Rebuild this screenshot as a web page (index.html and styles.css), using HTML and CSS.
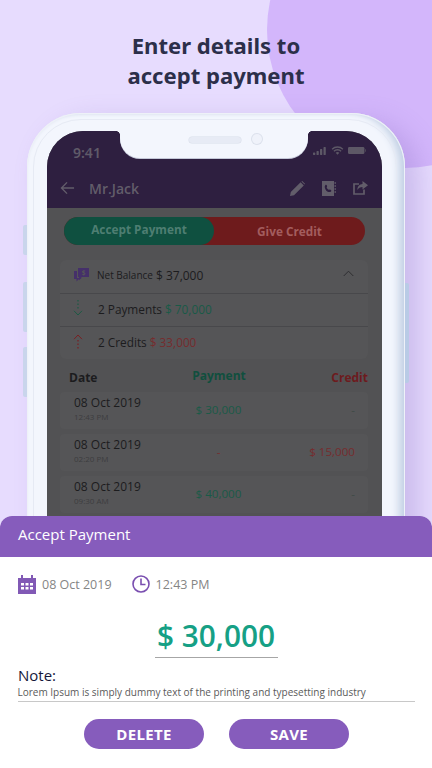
FILE: index.html
```
<!DOCTYPE html>
<html lang="en">
<head>
<meta charset="utf-8">
<title>Accept payment</title>
<link rel="stylesheet" href="styles.css">
</head>
<body>
<div class="page">
  <div class="blob"></div>
  <h1 class="title">Enter details to<br>accept payment</h1>
  <div class="phone">
    <span class="side side-a"></span><span class="side side-b"></span><span class="side side-c"></span><span class="side side-d"></span>
    <div class="screen">
      <div class="notch"><span class="speaker"></span><span class="camera"></span></div>
      <div class="appbar">
        <div class="status">
          <span class="clock">9:41</span>
          <div class="status-icons">
            <svg width="14" height="8" viewBox="0 0 16 10" preserveAspectRatio="none"><g fill="#5d5866"><rect x="0" y="7" width="2.6" height="3" rx=".6"/><rect x="4" y="5" width="2.6" height="5" rx=".6"/><rect x="8" y="2.5" width="2.6" height="7.5" rx=".6"/><rect x="12" y="0" width="2.6" height="10" rx=".6"/></g></svg>
            <svg width="13" height="9" viewBox="0 0 14 10"><path d="M1 3.6a8.6 8.6 0 0 1 12 0M3 5.8a5.7 5.7 0 0 1 8 0" fill="none" stroke="#5d5866" stroke-width="1.5"/><path d="M5 7.6a3 3 0 0 1 4 0L7 9.8z" fill="#5d5866"/></svg>
            <svg width="18" height="7" viewBox="0 0 18 8" preserveAspectRatio="none"><rect width="16.4" height="8" rx="1.4" fill="#5d5866"/><rect x="16.9" y="2.6" width="1.1" height="2.8" fill="#4a4454"/></svg>
          </div>
        </div>
        <div class="nav">
          <svg class="nav-back" width="15" height="14" viewBox="0 0 16 14"><path d="M15 7H2M7.5 1 1.6 7l5.900 6" fill="none" stroke="#625d6a" stroke-width="1.500"/></svg>
          <span class="nav-name">Mr.Jack</span>
          <svg class="nav-icon" width="15" height="15" viewBox="0 0 15 15"><path d="M0 15l.8-4L10.600 1.200l3.200 3.200L4 14.200zM11.400.4l.8-.4 2.800 2.800-.4.8z" fill="#625d6a"/></svg>
          <svg class="nav-icon" width="14" height="15" viewBox="0 0 14 15"><path d="M0 0h12v15H0z" fill="#625d6a"/><path d="M3.400 4c1-.8 1.700.5 1.700 1.300 0 .8-.5.8-.4 1.300.3 1 1 1.800 1.900 2.200.5.100.6-.5 1.300-.4.8.1 1.900 1 1.300 1.800-1.200 1.500-3.500.8-4.900-.5C3 8 2 5.300 3.400 4z" fill="#2e1f40"/><path d="M12.500 2h1.500M12.500 5h1.500M12.500 8h1.500M12.500 11h1.500" stroke="#625d6a" stroke-width="1.300"/></svg>
          <svg class="nav-icon" width="15" height="14" viewBox="0 0 15 14"><path d="M6 3H1v10h10V8.500" fill="none" stroke="#625d6a" stroke-width="1.700"/><path d="M9.500 0 15 4.200 9.500 8.500V6C7 6 5.500 7 4.300 9c.2-3.500 2.200-5.800 5.200-6z" fill="#625d6a"/></svg>
        </div>
      </div>
      <div class="content">
        <div class="toggle">
          <span class="toggle-on">Accept Payment</span>
          <span class="toggle-off">Give Credit</span>
        </div>
        <div class="panel">
          <div class="panel-row panel-head">
            <svg class="panel-icon" width="15" height="14" viewBox="0 0 15 14"><path d="M4 0h11v9H8l-3 2.500V9H4z" fill="#45306a"/><path d="M0 3h3v7h2v2.200L7.500 10H6l-3.500 3.500V11H0z" fill="#45306a"/><text x="9.500" y="7" font-size="6.500" font-family="Open Sans" font-weight="700" text-anchor="middle" fill="#555557">$</text></svg>
            <span class="net-label">Net Balance</span>
            <span class="net-value">$ 37,000</span>
            <svg class="chevron" width="11" height="7" viewBox="0 0 11 7"><path d="M.7 6 5.500 1.200 10.300 6" fill="none" stroke="#2e2e30" stroke-width="1"/></svg>
          </div>
          <div class="panel-row">
            <svg class="panel-icon arrow" width="10" height="17" viewBox="0 0 10 17"><path d="M5 0v10" stroke="#1c5a44" stroke-width="1.200" stroke-dasharray="1.500 2"/><path d="M1 10.800l4 4.200 4-4.200" fill="none" stroke="#1c5a44" stroke-width="1"/></svg>
            <span class="row-text">2 Payments <span class="green">$ 70,000</span></span>
          </div>
          <div class="panel-row">
            <svg class="panel-icon arrow" width="10" height="17" viewBox="0 0 10 17"><path d="M5 7v10" stroke="#7a1f22" stroke-width="1.200" stroke-dasharray="1.500 2"/><path d="M1 6.200l4-4.200 4 4.200" fill="none" stroke="#7a1f22" stroke-width="1"/></svg>
            <span class="row-text">2 Credits <span class="red">$ 33,000</span></span>
          </div>
        </div>
        <div class="thead">
          <span class="th-date">Date</span>
          <span class="th-pay">Payment</span>
          <span class="th-credit">Credit</span>
        </div>
        <div class="tx">
          <div class="tx-date"><div class="tx-day">08 Oct 2019</div><div class="tx-time">12:43 PM</div></div>
          <span class="tx-pay green">$ 30,000</span>
          <span class="tx-credit muted">-</span>
        </div>
        <div class="tx">
          <div class="tx-date"><div class="tx-day">08 Oct 2019</div><div class="tx-time">02:20 PM</div></div>
          <span class="tx-pay red">-</span>
          <span class="tx-credit red">$ 15,000</span>
        </div>
        <div class="tx">
          <div class="tx-date"><div class="tx-day">08 Oct 2019</div><div class="tx-time">09:30 AM</div></div>
          <span class="tx-pay green">$ 40,000</span>
          <span class="tx-credit muted">-</span>
        </div>
      </div>
    </div>
  </div>
  <div class="sheet">
    <div class="sheet-head">Accept Payment</div>
    <div class="sheet-body">
      <div class="when">
        <svg width="18" height="19" viewBox="0 0 18 19"><path d="M0 3h3V0h2v3h8V0h2v3h3v16H0z" fill="#8159b5"/><g fill="#fff"><rect x="3" y="8" width="3" height="2.500"/><rect x="7.500" y="8" width="3" height="2.500"/><rect x="12" y="8" width="3" height="2.500"/><rect x="3" y="12" width="3" height="2.500"/><rect x="7.500" y="12" width="3" height="2.500"/><rect x="12" y="12" width="3" height="2.500"/></g></svg>
        <span class="when-date">08 Oct 2019</span>
        <svg class="when-clock" width="18" height="18" viewBox="0 0 18 18"><circle cx="9" cy="9" r="8" fill="none" stroke="#7a4fb0" stroke-width="1.600"/><path d="M9 3.500V9.500h4.500" fill="none" stroke="#7a4fb0" stroke-width="1.600"/></svg>
        <span class="when-time">12:43 PM</span>
      </div>
      <div class="amount-wrap"><div class="amount">$ 30,000</div></div>
      <div class="note">
        <div class="note-label">Note:</div>
        <div class="note-text">Lorem Ipsum is simply dummy text of the printing and typesetting industry</div>
      </div>
      <div class="actions">
        <button class="btn" type="button">DELETE</button>
        <button class="btn" type="button">SAVE</button>
      </div>
    </div>
  </div>
</div>
</body>
</html>
```
FILE: styles.css
```
* { box-sizing: border-box; }
html, body { margin: 0; padding: 0; }
body { font-family: "Open Sans", sans-serif; }
.page {
  position: relative;
  width: 432px;
  height: 768px;
  overflow: hidden;
  background: #e7dcfe;
  padding-top: 29.5px;
}
.blob {
  position: absolute;
  left: 267px;
  top: -108px;
  width: 276px;
  height: 276px;
  border-radius: 50%;
  background: #d3b6fb;
}
.title {
  position: relative;
  margin: 0;
  width: 432px;
  text-align: center;
  font-family: "Noto Sans", sans-serif;
  font-size: 22.1px;
  line-height: 30px;
  font-weight: 700;
  color: #2c2f4a;
}
.phone {
  position: relative;
  width: 378px;
  height: 700px;
  margin: 23.5px 0 0 27px;
  padding: 18px 23px 0 20px;
  border-radius: 54px;
  background: #f3f6fd;
  box-shadow: inset 0 0 0 1px #eef1f8, inset -10px 0 8px -4px #c2d0e4, inset 0 2px 3px #e4e9f3, 14px 8px 26px rgba(130, 100, 190, .28);
}
.phone::before {
  content: "";
  position: absolute;
  inset: 6px 8px 0 6px;
  border: 1px solid #e6eaf4;
  border-radius: 48px;
}
.side { position: absolute; width: 4px; background: #c9d5ec; }
.side-a { left: -4px; top: 112px; height: 30px; border-radius: 2px 0 0 2px; }
.side-b { left: -4px; top: 169px; height: 50px; border-radius: 2px 0 0 2px; }
.side-c { left: -4px; top: 234px; height: 50px; border-radius: 2px 0 0 2px; }
.side-d { right: -4px; top: 170px; height: 100px; background: #b9cbe6; border-radius: 0 2px 2px 0; }
.screen {
  position: relative;
  width: 335px;
  height: 682px;
  border-radius: 36px 36px 0 0;
  overflow: hidden;
  background: #525254;
}
.notch {
  position: absolute;
  left: 73px;
  top: 0;
  width: 188px;
  height: 27px;
  background: #f3f6fd;
  border-radius: 0 0 20px 20px;
  box-shadow: 0 1px 0 #c4c8d8;
}
.notch::before,
.notch::after {
  content: "";
  position: absolute;
  top: 0;
  width: 4px;
  height: 4px;
}
.notch::before { left: -4px; background: radial-gradient(circle at 0 100%, transparent 3.6px, #f3f6fd 4.2px); }
.notch::after { right: -4px; background: radial-gradient(circle at 100% 100%, transparent 3.6px, #f3f6fd 4.2px); }
.speaker {
  position: absolute;
  left: 69px;
  top: 6px;
  width: 52px;
  height: 6px;
  border-radius: 3px;
  background: #e7ebf5;
  box-shadow: 0 0 0 .5px #d8deea;
}
.camera {
  position: absolute;
  left: 132px;
  top: 3px;
  width: 10px;
  height: 10px;
  border-radius: 50%;
  background: #eff2fa;
  box-shadow: 0 0 0 1px #dce1ec;
}
.appbar { height: 77px; background: #2e1f40; }
.status {
  display: flex;
  justify-content: space-between;
  align-items: flex-start;
  padding: 12px 16px 0 26px;
  height: 45px;
}
.clock { font-family: "Noto Sans", sans-serif; font-size: 14px; line-height: 20px; font-weight: 600; color: #5f5a68; }
.status-icons { display: flex; gap: 4px; align-items: center; height: 13px; margin-top: 1px; }
.nav { display: flex; align-items: center; height: 24px; padding: 0 14px 0 13px; }
.nav-back { margin-right: 14px; }
.nav-name { flex: 1; font-size: 14px; font-weight: 600; color: #625d6a; }
.nav-icon { margin-left: 17px; }
.content { padding: 9px 14px 0 13px; }
.toggle {
  display: flex;
  width: 301px;
  height: 28px;
  margin-left: 4px;
  border-radius: 14px;
  background: #6e1b1c;
  font-size: 11.8px;
  font-weight: 700;
}
.toggle-on {
  width: 150px;
  height: 28px;
  padding-top: 1px;
  line-height: 23px;
  text-align: center;
  border-radius: 14px;
  background: #0f5040;
  color: #4e7e72;
}
.toggle-off { flex: 1; line-height: 28px; text-align: center; color: #a35d5e; }
.panel {
  width: 308px;
  margin: 15px 0 0 0;
  border-radius: 6px;
  background: #555557;
  color: #1c1c1e;
}
.panel-row {
  display: flex;
  align-items: center;
  height: 33px;
  padding: 0 0 3px 14px;
  border-top: 1px solid #48484b;
}
.panel-head { border-top: 0; }
.panel-icon { margin-right: 8px; flex: none; }
.arrow { margin-left: -1px; margin-right: 15px; }
.net-label { font-size: 10px; margin-right: 3px; }
.net-value { font-size: 12px; font-weight: 400; }
.chevron { margin-left: auto; margin-right: 14px; margin-top: -4px; }
.row-text { font-size: 11.8px; }
.green { color: #1a5a47; }
.red { color: #762c2e; }
.muted { color: #3f4a46; }
.thead {
  display: grid;
  grid-template-columns: 106px 104px 98px;
  align-items: center;
  height: 24px;
  margin-top: 5px;
  margin-bottom: 4px;
  font-size: 12px;
  font-weight: 700;
}
.th-date { padding-left: 9px; color: #1c1c1e; padding-top: 2px; }
.th-pay { text-align: center; color: #104f3e; padding: 0 0 2px 2px; }
.th-credit { text-align: right; color: #6d1b1e; padding-top: 2px; }
.tx {
  display: grid;
  grid-template-columns: 106px 104px 98px;
  align-items: center;
  height: 37px;
  margin-bottom: 5px;
  border-radius: 4px;
  background: #555557;
}
.tx-date { padding: 0 0 4px 14px; }
.tx-day { font-size: 12px; line-height: 15px; color: #1c1c1e; white-space: nowrap; }
.tx-time { font-size: 8px; line-height: 12px; color: #3d3d3f; margin-top: 1px; }
.tx-pay { font-size: 11.6px; text-align: center; padding: 0 0 2px 1px; white-space: nowrap; }
.tx-credit { font-size: 11.6px; text-align: right; padding: 0 13px 2px 0; }
.sheet { position: absolute; left: 0; right: 0; top: 516px; bottom: 0; background: #fff; border-radius: 12px 12px 0 0; }
.sheet-head {
  height: 41px;
  padding-left: 18px;
  border-radius: 12px 12px 0 0;
  background: #865cbc;
  color: #fff;
  font-size: 15px;
  line-height: 37px;
}
.sheet-body { padding: 18px 18px 0; }
.when { display: flex; align-items: center; height: 18px; color: #858585; font-size: 12.5px; }
.when-date { margin-left: 6px; }
.when-clock { margin-left: 20px; }
.when-time { margin-left: 6px; }
.amount-wrap { display: flex; justify-content: center; margin-top: 22px; }
.amount {
  width: 123px;
  text-align: center;
  font-size: 29.8px;
  line-height: 42px;
  font-weight: 600;
  white-space: nowrap;
  color: #16a085;
  border-bottom: 1px solid #a6a6a6;
}
.note { margin-top: 8px; width: 397px; border-bottom: 1px solid #c8c8c8; padding-bottom: 2px; }
.note-label { font-size: 15px; line-height: 19px; font-weight: 500; color: #15173a; }
.note-text { font-size: 10px; line-height: 14px; color: #5a5a5a; white-space: nowrap; margin-left: -.5px; }
.actions { display: flex; justify-content: center; gap: 25px; margin-top: 17px; margin-left: 1px; }
.btn {
  width: 120px;
  height: 30px;
  padding: 0;
  border: 0;
  border-radius: 15px;
  background: #865cbc;
  color: #fff;
  font-family: "Open Sans", sans-serif;
  font-size: 15px;
  font-weight: 700;
  letter-spacing: .3px;
}
```
